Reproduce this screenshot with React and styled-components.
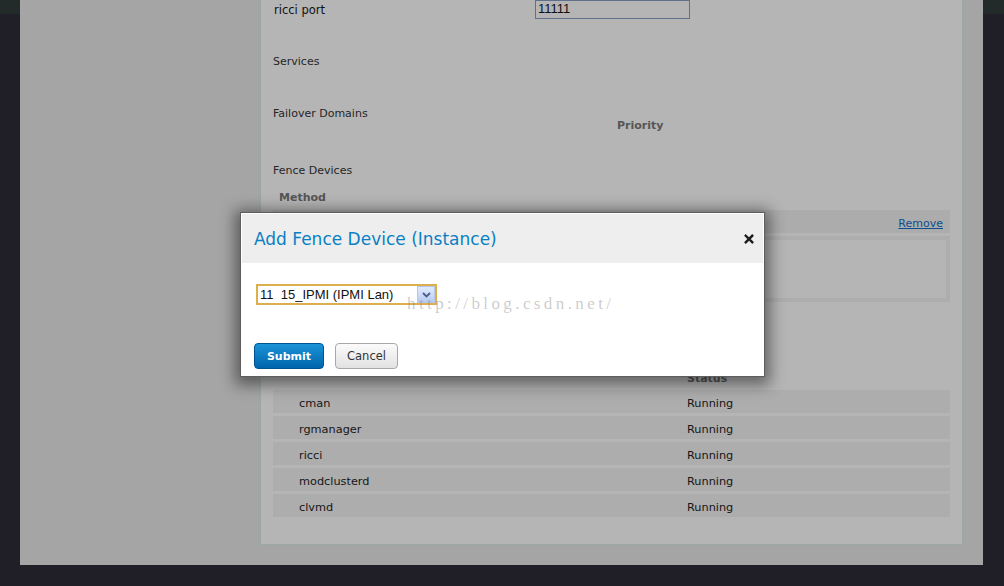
import React from "react";
import styled, { createGlobalStyle } from "styled-components";

const Global = createGlobalStyle`
  html, body { margin: 0; padding: 0; }
  body {
    width: 1004px;
    height: 586px;
    overflow: hidden;
    background: linear-gradient(#222b2a 0, #222b2a 14px, #201f28 14px);
    font-family: "DejaVu Sans", Verdana, sans-serif;
  }
`;

const Frame = styled.div`
  position: relative;
  width: 1004px;
  height: 586px;
  padding: 0 21px 0 20px;
  box-sizing: border-box;
`;

const Page = styled.div`
  height: 565px;
  background: #a5a5a5;
  padding: 0 20px 20px 240px;
  box-sizing: border-box;
  display: flex;
`;

const Panel = styled.div`
  flex: 1;
  background: #b5b5b5;
  border: 1px solid #9aa8a4;
  border-top: none;
  padding: 0 12px;
  display: flex;
  flex-direction: column;
  font-size: 11px;
  color: #1e1e1e;
`;

const PortRow = styled.div`
  display: grid;
  grid-template-columns: 262px 155px;
  align-items: center;
  height: 19px;
`;

const PortLabel = styled.span`
  padding-left: 1px;
  font-size: 11.5px;
  color: #111;
`;

const PortInput = styled.div`
  height: 19px;
  margin-top: -1px;
  box-sizing: border-box;
  border: 1px solid #5f6f8c;
  padding-left: 2px;
  font-family: "Liberation Sans", Arial, sans-serif;
  font-size: 13px;
  line-height: 16px;
  color: #111;
`;

const Label = styled.div`
  height: 16px;
  line-height: 20px;
  margin-top: ${(p) => p.$mt || 0}px;
  padding-left: ${(p) => p.$pl || 0}px;
  font-weight: ${(p) => (p.$bold ? "bold" : "normal")};
  color: ${(p) => (p.$bold ? "#555" : "#262626")};
`;

const MethodHeader = styled.div`
  margin-top: 6px;
  height: 23px;
  background: #acacac;
  display: flex;
  justify-content: flex-end;
  align-items: flex-end;
  padding: 0 7px 3px 0;
  box-sizing: border-box;
`;

const RemoveLink = styled.a`
  color: #0b4f8f;
  text-decoration: underline;
  font-size: 11px;
  cursor: pointer;
`;

const MethodBox = styled.div`
  margin-top: 3px;
  height: 66px;
  box-sizing: border-box;
  border: 4px solid #adadad;
`;

const Rows = styled.div`
  margin-top: 5px;
  display: flex;
  flex-direction: column;
  gap: 3px;
`;

const Row = styled.div`
  height: 23px;
  box-sizing: border-box;
  padding-top: 3px;
  background: #adadad;
  display: grid;
  grid-template-columns: 414px 1fr;
  align-items: center;
  color: #161616;
  font-size: 11.3px;
`;

const Cell = styled.span`
  padding-left: ${(p) => p.$pl || 0}px;
`;

const Modal = styled.div`
  position: absolute;
  left: 240px;
  top: 212px;
  width: 525px;
  box-sizing: border-box;
  border: 1px solid #5e5e5e;
  padding: 1px;
  background: #fff;
  box-shadow: 0 3px 14px 5px rgba(0, 0, 0, 0.45);
  &::before {
    content: "";
    position: absolute;
    inset: -15px;
    border-radius: 16px;
    background: rgba(150, 165, 165, 0.22);
    box-shadow: 0 0 0 1px rgba(160, 180, 180, 0.25);
    z-index: -1;
  }
`;

const ModalHeader = styled.div`
  height: 49px;
  background: #eeeeee;
  display: flex;
  align-items: center;
  justify-content: space-between;
  padding: 0 9px 0 12px;
`;

const Title = styled.h3`
  margin: 0;
  font-family: "DejaVu Sans", Verdana, sans-serif;
  font-weight: normal;
  font-size: 17px;
  color: #0a7fc4;
`;

const CloseBtn = styled.button`
  border: none;
  background: none;
  padding: 0;
  width: 10px;
  height: 10px;
  display: flex;
  cursor: pointer;
`;

const ModalBody = styled.div`
  padding: 21px 12px 6px 12px;
  display: flex;
  flex-direction: column;
`;

const SelectBox = styled.div`
  margin-left: 2px;
  width: 181px;
  height: 21px;
  box-sizing: border-box;
  border: 2px solid #dcae4c;
  background: #fff;
  display: flex;
  align-items: center;
  justify-content: space-between;
  padding-left: 2px;
  font-family: "Liberation Sans", Arial, sans-serif;
  font-size: 13px;
  color: #111;
`;

const SelectArrow = styled.span`
  width: 18px;
  height: 17px;
  box-sizing: border-box;
  border: 1px solid #b4c7ec;
  background: linear-gradient(#e2ebfc, #b6ccf4);
  display: flex;
  align-items: center;
  justify-content: center;
`;

const Buttons = styled.div`
  margin-top: 38px;
  display: flex;
  gap: 11px;
`;

const PrimaryButton = styled.button`
  width: 70px;
  height: 26px;
  border: 1px solid #005590;
  border-radius: 4px;
  background: linear-gradient(#1c93d8, #0065ab);
  color: #fff;
  font-family: "DejaVu Sans", Verdana, sans-serif;
  font-weight: bold;
  font-size: 11px;
  cursor: pointer;
`;

const SecondaryButton = styled.button`
  width: 63px;
  height: 26px;
  border: 1px solid #a8a8a8;
  border-radius: 4px;
  background: linear-gradient(#fbfbfb, #e2e2e2);
  color: #333;
  font-family: "DejaVu Sans", Verdana, sans-serif;
  font-size: 11.5px;
  cursor: pointer;
`;

const Watermark = styled.div`
  position: absolute;
  left: 166px;
  top: 81px;
  line-height: 20px;
  font-family: "Liberation Serif", "Times New Roman", serif;
  font-size: 17px;
  letter-spacing: 3.4px;
  color: rgba(140, 140, 140, 0.45);
  pointer-events: none;
  white-space: nowrap;
`;

const services = ["cman", "rgmanager", "ricci", "modclusterd", "clvmd"];

export default function App() {
  return (
    <>
      <Global />
      <Frame>
        <Page>
          <Panel>
            <PortRow>
              <PortLabel>ricci port</PortLabel>
              <PortInput>11111</PortInput>
            </PortRow>
            <Label $mt={33} $pl={-1}>Services</Label>
            <Label $mt={36}>Failover Domains</Label>
            <Label $mt={-4} $pl={344} $bold>Priority</Label>
            <Label $mt={29}>Fence Devices</Label>
            <Label $mt={11} $pl={6} $bold>Method</Label>
            <MethodHeader>
              <RemoveLink>Remove</RemoveLink>
            </MethodHeader>
            <MethodBox />
            <Label $mt={67} $pl={414} $bold>Status</Label>
            <Rows>
              {services.map((s) => (
                <Row key={s}>
                  <Cell $pl={26}>{s}</Cell>
                  <Cell>Running</Cell>
                </Row>
              ))}
            </Rows>
          </Panel>
        </Page>
        <Modal>
          <ModalHeader>
            <Title>Add Fence Device (Instance)</Title>
            <CloseBtn aria-label="close">
              <svg width="10" height="10" viewBox="0 0 10 10">
                <path d="M1.8 1.8 L8.2 8.2 M8.2 1.8 L1.8 8.2" stroke="#1c1c1c" strokeWidth="2.4" strokeLinecap="square" />
              </svg>
            </CloseBtn>
          </ModalHeader>
          <ModalBody>
            <SelectBox>
              <span>11&nbsp;&nbsp;15_IPMI (IPMI Lan)</span>
              <SelectArrow>
                <svg width="9" height="6" viewBox="0 0 9 6">
                  <path d="M1 1 L4.5 4.5 L8 1" stroke="#4a5d86" strokeWidth="1.8" fill="none" />
                </svg>
              </SelectArrow>
            </SelectBox>
            <Buttons>
              <PrimaryButton>Submit</PrimaryButton>
              <SecondaryButton>Cancel</SecondaryButton>
            </Buttons>
          </ModalBody>
          <Watermark>http://blog.csdn.net/</Watermark>
        </Modal>
      </Frame>
    </>
  );
}
